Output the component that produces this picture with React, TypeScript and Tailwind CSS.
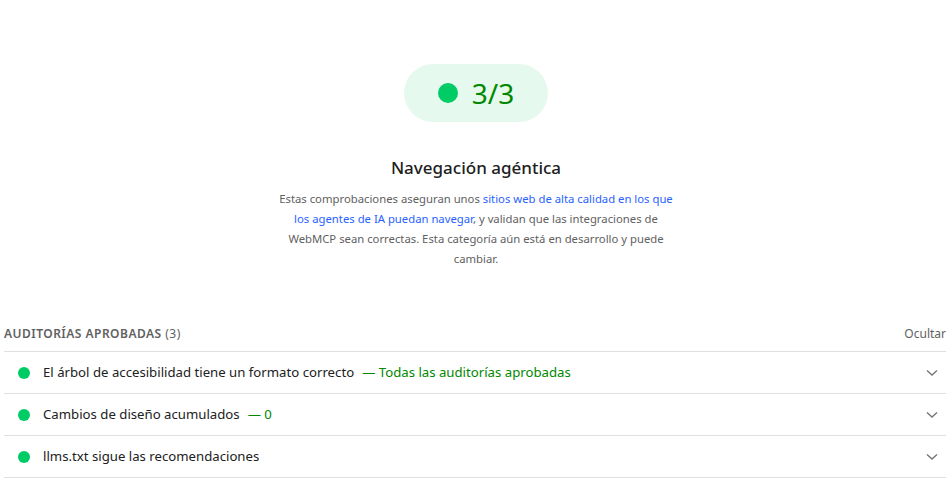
import React from "react";

const rows = [
  { title: "El árbol de accesibilidad tiene un formato correcto", extra: "Todas las auditorías aprobadas" },
  { title: "Cambios de diseño acumulados", extra: "0" },
  { title: "llms.txt sigue las recomendaciones", extra: "" },
];

function Chevron() {
  return (
    <svg width="12" height="8" viewBox="0 0 12 8" fill="none">
      <path d="M1 1.5 L6 6 L11 1.5" stroke="#757575" strokeWidth="1.4" />
    </svg>
  );
}

export default function App() {
  return (
    <div
      className="w-[952px] h-[499px] bg-white text-[#212121] overflow-hidden"
      style={{ fontFamily: '"Noto Sans", "Open Sans", sans-serif' }}
    >
      <div className="flex flex-col items-center pt-[64px]">
        <div className="flex items-center h-[58px] px-[34px] rounded-full bg-[#e6f9ee] gap-[14px]">
          <span className="w-[20px] h-[20px] rounded-full bg-[#00cc66]" />
          <span className="text-[28px] leading-none text-[#008800]">3/3</span>
        </div>
        <h2 className="mt-[34px] text-[17px] leading-[24px] font-medium text-[#212121]">
          Navegación agéntica
        </h2>
        <p className="mt-[9px] text-center text-[11.3px] leading-[20px] text-[#616161] whitespace-nowrap">
          Estas comprobaciones aseguran unos{" "}
          <span className="text-[#2962ff]">sitios web de alta calidad en los que</span>
          <br />
          <span className="text-[#2962ff]">los agentes de IA puedan navegar</span>, y validan que las integraciones de
          <br />
          WebMCP sean correctas. Esta categoría aún está en desarrollo y puede
          <br />
          cambiar.
        </p>
      </div>
      <div className="mt-[52px] pl-[4px] pr-[6px]">
        <div className="flex items-center justify-between h-[31px] pb-[4px] border-b border-[#e0e0e0]">
          <div className="text-[12px] tracking-[0.04em] text-[#616161] font-semibold">
            AUDITORÍAS APROBADAS <span className="font-normal">(3)</span>
          </div>
          <div className="text-[12px] text-[#616161]">Ocultar</div>
        </div>
        {rows.map((r) => (
          <div key={r.title} className="flex items-center h-[42px] border-b border-[#e0e0e0] pl-[14px] pr-[8px]">
            <span className="w-[12px] h-[12px] rounded-full bg-[#00cc66] shrink-0" />
            <span className="ml-[13px] text-[13.2px] text-[#212121]">{r.title}</span>
            {r.extra && (
              <span className="ml-[8px] text-[13.2px] text-[#008800]">— {r.extra}</span>
            )}
            <span className="ml-auto">
              <Chevron />
            </span>
          </div>
        ))}
      </div>
    </div>
  );
}
